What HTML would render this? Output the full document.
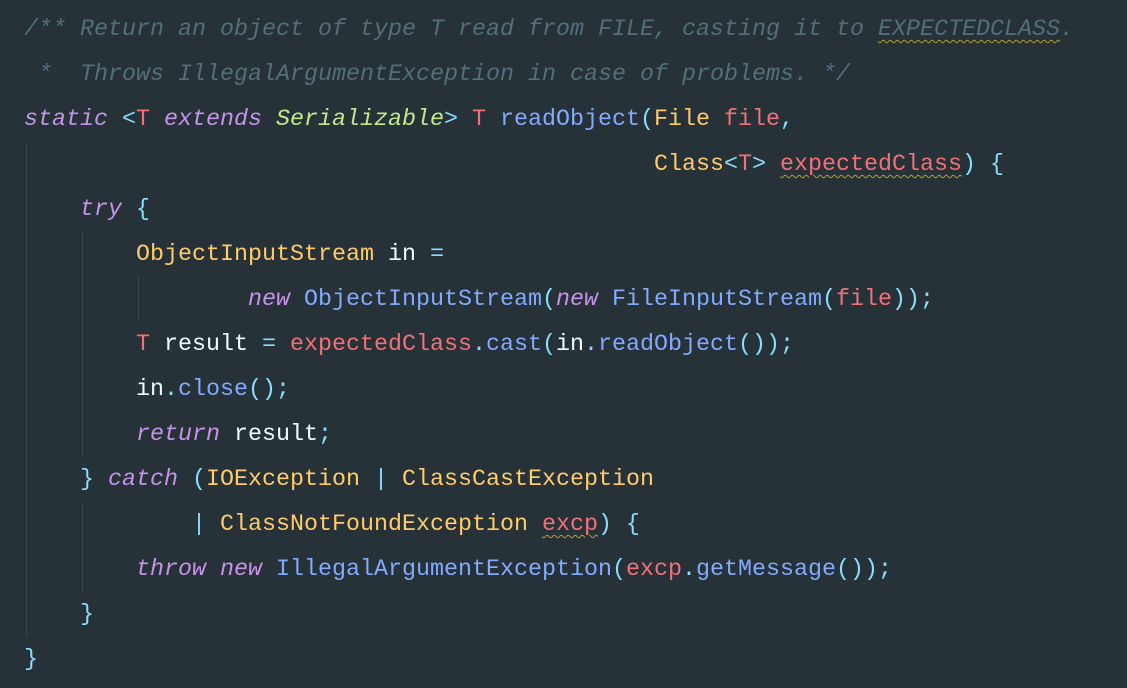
<!DOCTYPE html>
<html><head><meta charset="utf-8"><style>
html,body{margin:0;padding:0;background:#263238;width:1127px;height:688px;overflow:hidden}
pre{margin:0;position:absolute;left:24px;top:8px;font-family:"Liberation Mono",monospace;font-size:23.33px;line-height:45px;color:#eeffff}
.c{color:#546e7a;font-style:italic}
.k{color:#c792ea;font-style:italic}
.t{color:#f07178}
.y{color:#ffcb6b}
.g{color:#c3e88d;font-style:italic}
.f{color:#82aaff}
.p{color:#89ddff}
.w{text-decoration:underline wavy #b8a030;text-decoration-thickness:1px;text-underline-offset:4px}
.gd{position:absolute;width:1px;background:#37474f}
</style></head><body>
<div class="gd" style="left:26px;top:142px;height:495px"></div>
<div class="gd" style="left:82px;top:232px;height:225px"></div>
<div class="gd" style="left:82px;top:502px;height:90px"></div>
<div class="gd" style="left:138px;top:276px;height:45px"></div>
<pre><span class="c">/** Return an object of type T read from FILE, casting it to <span class="w">EXPECTEDCLASS</span>.</span>
<span class="c"> *  Throws IllegalArgumentException in case of problems. */</span>
<span class="k">static</span> <span class="p">&lt;</span><span class="t">T</span> <span class="k">extends</span> <span class="g">Serializable</span><span class="p">&gt;</span> <span class="t">T</span> <span class="f">readObject</span><span class="p">(</span><span class="y">File</span> <span class="t">file</span><span class="p">,</span>
                                             <span class="y">Class</span><span class="p">&lt;</span><span class="t">T</span><span class="p">&gt;</span> <span class="t w">expectedClass</span><span class="p">)</span> <span class="p">{</span>
    <span class="k">try</span> <span class="p">{</span>
        <span class="y">ObjectInputStream</span> in <span class="p">=</span>
                <span class="k">new</span> <span class="f">ObjectInputStream</span><span class="p">(</span><span class="k">new</span> <span class="f">FileInputStream</span><span class="p">(</span><span class="t">file</span><span class="p">));</span>
        <span class="t">T</span> result <span class="p">=</span> <span class="t">expectedClass</span><span class="p">.</span><span class="f">cast</span><span class="p">(</span>in<span class="p">.</span><span class="f">readObject</span><span class="p">());</span>
        in<span class="p">.</span><span class="f">close</span><span class="p">();</span>
        <span class="k">return</span> result<span class="p">;</span>
    <span class="p">}</span> <span class="k">catch</span> <span class="p">(</span><span class="y">IOException</span> <span class="p">|</span> <span class="y">ClassCastException</span>
            <span class="p">|</span> <span class="y">ClassNotFoundException</span> <span class="t w">excp</span><span class="p">)</span> <span class="p">{</span>
        <span class="k">throw</span> <span class="k">new</span> <span class="f">IllegalArgumentException</span><span class="p">(</span><span class="t">excp</span><span class="p">.</span><span class="f">getMessage</span><span class="p">());</span>
    <span class="p">}</span>
<span class="p">}</span></pre>
</body></html>
